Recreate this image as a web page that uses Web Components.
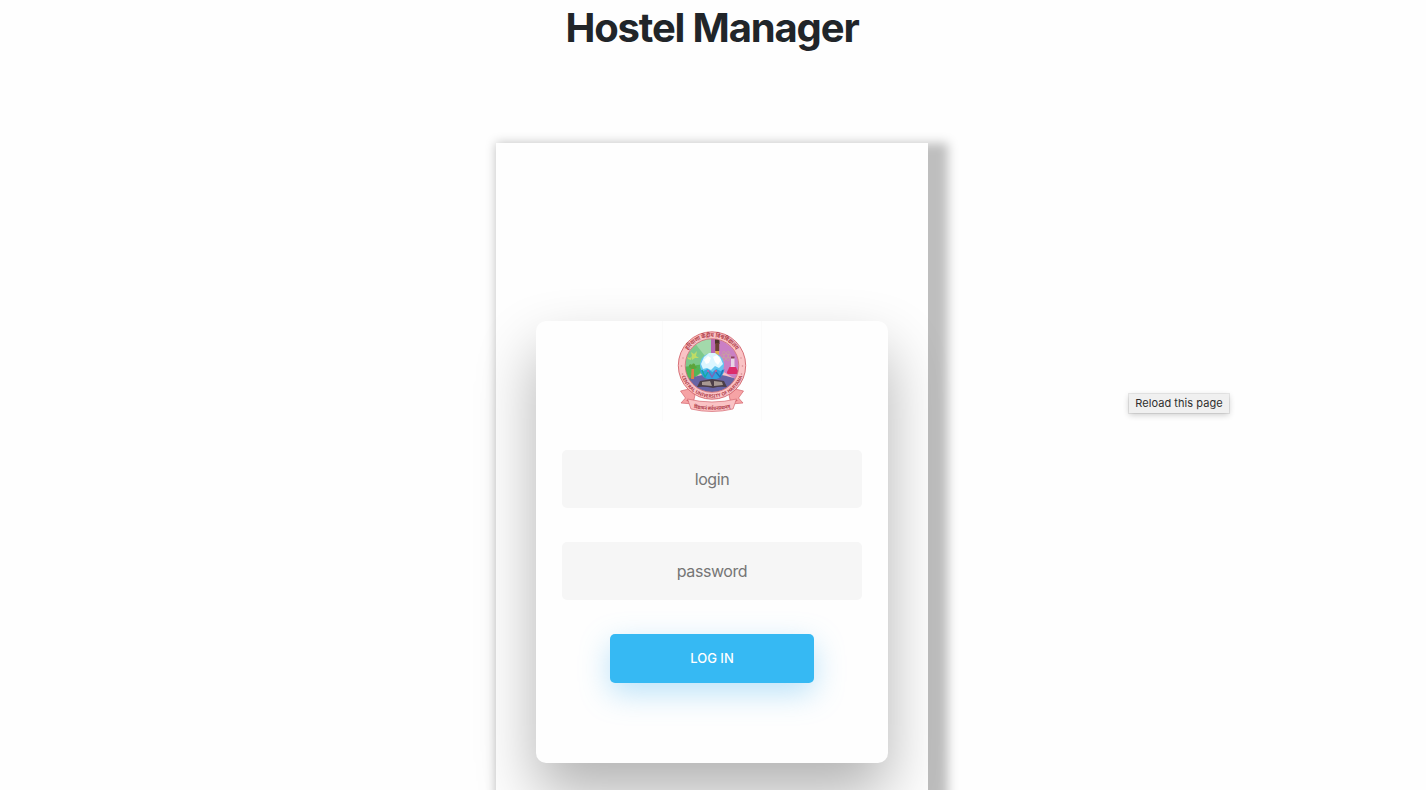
<!DOCTYPE html>
<html lang="en">
<head>
<meta charset="utf-8">
<title>Hostel Manager</title>
<style>
html,body{margin:0;height:790px;overflow:hidden;background:#fefefe}
body{font-family:Inter,"Liberation Sans",sans-serif;color:#212529}
</style>
</head>
<body>
<hostel-page>
  <login-card>
    <university-crest slot="logo"></university-crest>
    <login-field>login</login-field>
    <login-field>password</login-field>
    <login-button>LOG IN</login-button>
  </login-card>
</hostel-page>
<hover-tip>Reload this page</hover-tip>
<script>
const define = (name, html) => {
  const t = document.createElement('template');
  t.innerHTML = html;
  customElements.define(name, class extends HTMLElement {
    constructor() {
      super();
      this.attachShadow({mode: 'open'}).append(t.content.cloneNode(true));
    }
  });
};

define('hostel-page', `<style>
:host{display:flex;flex-direction:column;align-items:center;width:1424px;height:790px;overflow:hidden}
h1{margin:4px 0 0;font-size:40px;line-height:48px;font-weight:700;letter-spacing:-1.15px;white-space:nowrap}
main{box-sizing:border-box;flex:none;width:432px;height:760px;margin-top:91px;padding:178px 40px 0;background:#fefefe;
box-shadow:10px 10px 10px 10px rgba(0,0,0,.25)}
</style><h1>Hostel Manager</h1><main><slot></slot></main>`);

define('login-card', `<style>
:host{display:block;box-sizing:border-box;height:442px;border-radius:10px;background:#fefefe;box-shadow:0 30px 60px rgba(0,0,0,.3)}
header{display:flex;justify-content:center;height:129px}
form{display:flex;flex-direction:column;align-items:center;gap:34px}
</style><header><slot name="logo"></slot></header><form><slot></slot></form>`);

define('login-field', `<style>
:host{display:flex;width:300px;height:58px;border-radius:5px;background:#f6f6f6;align-items:center;justify-content:center;font-size:16px;line-height:24px;color:#757575;letter-spacing:-.42px}
</style><span><slot></slot></span>`);

define('login-button', `<style>
:host{display:flex;width:204px;height:49px;border-radius:5px;background:#36b9f3;box-shadow:0 10px 30px rgba(86,186,243,.4);align-items:center;justify-content:center;font-size:13px;font-weight:500;color:#fff}
span{line-height:16px;padding-bottom:1px}
</style><span><slot></slot></span>`);

define('hover-tip', `<style>
:host{position:absolute;left:1129px;top:394px;width:100px;height:19px;display:flex;align-items:center;justify-content:center;background:#f0f0f0;box-shadow:0 0 0 1px rgba(0,0,0,.08),0 2px 6px rgba(0,0,0,.2);font-size:11px;letter-spacing:.06px;color:#2e2e2e;white-space:nowrap}
span{line-height:14px;padding-bottom:1px}
</style><span><slot></slot></span>`);

define('university-crest', `<style>
:host{display:block;width:100px;height:100px}
svg{display:block}
text{font-family:"Noto Sans Devanagari","Noto Sans",sans-serif;font-weight:700;fill:#b03d4a}
</style>
<svg width="100" height="100" viewBox="0 0 100 100">
<defs>
<clipPath id="disc"><circle cx="50" cy="44.5" r="26.5"/></clipPath>
<path id="top" d="M21.6 44.5A28.4 28.4 0 0 1 78.4 44.5"/>
<path id="bottom" d="M17.8 44.5A32.2 32.2 0 0 0 82.2 44.5"/>
<path id="scroll" d="M29 86.5Q50 91.5 71 86.5"/>
</defs>
<path d="M.5 0v100M99.5 0v100" stroke="#fafafa"/>
<path d="M27 68L18.500 70l5 7-4.500 5 12 1 2-9zM73 68l8.500 2-5 7 4.500 5-12 1-2-9z" fill="#f6a3a5" stroke="#d4666e" stroke-width=".7"/>
<path d="M24 79l7 1v4M76 79l-7 1v4" fill="#c94f5a"/>
<circle cx="50" cy="44.500" r="33.700" fill="#fac3c5" stroke="#d2646c" stroke-width=".9"/>
<g clip-path="url(#disc)">
<path d="M20 15h30v30L25 62l-6-3z" fill="#7dc98b"/>
<path d="M50 15l-18 6 18 23z" fill="#a3d9ab"/>
<path d="M21 46l29-4-24 20z" fill="#52b657"/>
<path d="M50 15h30v47L50 44z" fill="#ca7fc4"/>
<path d="M22 60Q36 53 50 53t28 7v14H22z" fill="#6864a4"/>
<path d="M49 16h4v27h-4z" fill="#b968b3"/>
<path d="M53 18h4.500v5H53z" fill="#4d3429"/><path d="M53.200 22h4v8h-4z" fill="#6d4134"/><path d="M53.300 30h3.700v5h-3.700z" fill="#e2ad4d"/>
<path d="M29 31l3 2 3-3-1 5 3 2-4 0-3 2 0-4zM25 36l3 1 2-2-1 4-3-1z" fill="#bfdc65"/>
<path d="M28 47c-3-3 1-5 2-3 1-3 4-1 3 1 3 0 2 3-1 3v10h-2V48z" fill="#5da43b"/>
<path d="M29.500 48h2.500v10h-3z" fill="#e07d47"/>
<g fill="none" stroke="#c8a39d" stroke-width=".7"><ellipse cx="64" cy="35" rx="5.500" ry="2"/><ellipse cx="64" cy="35" rx="5.500" ry="2" transform="rotate(60 64 35)"/><ellipse cx="64" cy="35" rx="5.500" ry="2" transform="rotate(120 64 35)"/></g>
<path d="M69 37h3.500v8l3 4h-9l2.500-4z" fill="#e8d5e5"/>
<path d="M67.500 46h6.500l2.500 5q0 2-2 2h-8q-2 0-1.500-2z" fill="#dc2d6b"/><path d="M69 35.500h3.500v2H69z" fill="#8c405c"/>
</g>
<circle cx="50" cy="44.500" r="26.800" fill="none" stroke="#c66069" stroke-width=".7"/>
<circle cx="50" cy="44" r="12" fill="#63c6f0"/>
<path d="M39 43l3-7 5-4h6l5 4 3 7-4 4-4-2-4 4-4-2-4 1z" fill="#dcf6ff"/>
<path d="M42 39l4-4 3 2-2 5-3 1zM51 36l4-2 4 5-3 5-3-3z" fill="#fff"/>
<path d="M37.500 48q2 9 8 10h9q7-2 8-10l-4 2-4-2-4 3-5-3-4 2z" fill="#30a2dd"/>
<g fill="none" stroke-width="1.400"><path d="M40 49l3 7 3-5" stroke="#14aaa0"/><path d="M46 49l4 7 4-7" stroke="#7964b8"/><path d="M54 51l4 5 3-7" stroke="#2574b8"/></g>
<circle cx="46" cy="50" r="1" fill="#b46ab0"/><circle cx="54" cy="50" r="1" fill="#cc5f92"/>
<path d="M38 60l12-2 12 2 3 6q-8-1-14 1-8-2-16-1z" fill="#4d3f48"/>
<path d="M40 61l8-1 2 5-10-1zM52 60l8 1 1 3-9 1z" fill="#a89993"/>
<g fill="#d58a90"><circle cx="19.500" cy="45" r=".8"/><circle cx="20.500" cy="53" r=".8"/><circle cx="80.500" cy="45" r=".8"/><circle cx="79.500" cy="53" r=".8"/><circle cx="21" cy="37" r=".7"/><circle cx="79" cy="37" r=".7"/></g>
<text font-size="6.200"><textPath href="#top" startOffset="50%" text-anchor="middle" textLength="57" lengthAdjust="spacingAndGlyphs">हरियाणा केंद्रीय विश्वविद्यालय</textPath></text>
<text font-size="4.700"><textPath href="#bottom" startOffset="50%" text-anchor="middle" textLength="79" lengthAdjust="spacingAndGlyphs">CENTRAL UNIVERSITY OF HARYANA</textPath></text>
<path d="M25.500 78q24.500 6 49 0l-3.500 10q-21 5-42 0z" fill="#fac3c5" stroke="#d66a72" stroke-width=".7"/>
<text font-size="5.200"><textPath href="#scroll" startOffset="50%" text-anchor="middle" textLength="37" lengthAdjust="spacingAndGlyphs">विद्याधनं सर्वधनप्रधानम्</textPath></text>
</svg>`);
</script>
</body>
</html>
